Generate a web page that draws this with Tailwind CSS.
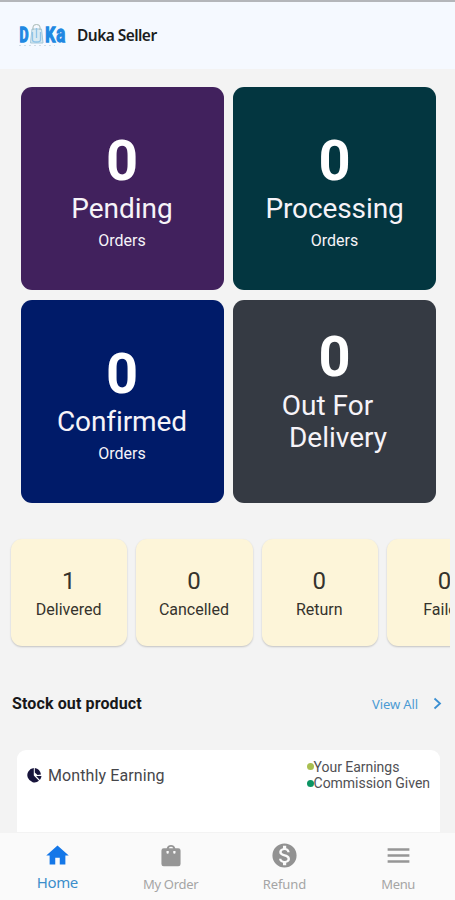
<!DOCTYPE html>
<html lang="en">
<head>
<meta charset="utf-8">
<meta name="viewport" content="width=device-width, initial-scale=1">
<title>Duka Seller</title>
<script src="https://cdn.jsdelivr.net/npm/@tailwindcss/browser@4"></script>
</head>
<body class="w-[455px] h-[900px] overflow-hidden bg-[#f3f3f3] font-['Roboto',sans-serif] flex flex-col whitespace-nowrap">
  <header class="h-[69px] shrink-0 border-t-2 border-[#b4b6ba] bg-[#f5f9ff] flex items-center pl-[19px]">
    <svg class="w-[48px] h-[26px] shrink-0 overflow-visible" viewBox="0 0 48 26">
      <g fill="#2088e2" stroke="#2088e2" stroke-width="1.3" class="font-['Roboto',sans-serif] font-bold">
        <text x="0.6" y="18.7" font-size="20" textLength="9" lengthAdjust="spacingAndGlyphs">D</text>
        <text x="26.3" y="18.7" font-size="20" textLength="10" lengthAdjust="spacingAndGlyphs">K</text>
        <text x="37.2" y="18.7" font-size="24" textLength="9" lengthAdjust="spacingAndGlyphs">a</text>
      </g>
      <path d="M13 6H22.500L24 20H11.500Z" fill="#d9eaf2" stroke="#a5c8d9"/>
      <path d="M14 7V4Q14 1.500 17.500 1.500T21 4V7" fill="none" stroke="#a8b9b5"/>
      <path d="M13.500 9V17Q13.500 19 17.500 19T21.500 17V9M17.500 5V15" fill="none" stroke="#8fc4e8" stroke-width="1.300"/>
      <path d="M0 22.500H36" stroke="#d2dce5" stroke-width="1" stroke-dasharray="2 3"/>
    </svg>
    <h1 class="ml-[10px] font-['Noto_Sans'] text-[15.5px] font-semibold tracking-[-0.55px] text-[#1b1c20]">Duka Seller</h1>
  </header>

  <main class="h-[763px] shrink-0 overflow-hidden">
    <section class="mt-[18px] ml-[20.5px] grid grid-cols-[203px_203px] grid-rows-[203px_203px] gap-[9.5px] text-[#f6f3f8] text-center">
      <div class="rounded-[11px] bg-[#41215d] pt-[44px]">
        <div class="text-[56px] leading-[60px] font-bold text-white">0</div>
        <div class="mt-[1px] text-[28px] leading-[34px]">Pending</div>
        <div class="mt-[5px] text-[16px] leading-[20px]">Orders</div>
      </div>
      <div class="rounded-[11px] bg-[#033640] pt-[44px]">
        <div class="text-[56px] leading-[60px] font-bold text-white">0</div>
        <div class="mt-[1px] text-[28px] leading-[34px] tracking-[-0.1px]">Processing</div>
        <div class="mt-[5px] text-[16px] leading-[20px]">Orders</div>
      </div>
      <div class="rounded-[11px] bg-[#001b69] pt-[44px]">
        <div class="text-[56px] leading-[60px] font-bold text-white">0</div>
        <div class="mt-[1px] text-[28px] leading-[34px] tracking-[-0.1px]">Confirmed</div>
        <div class="mt-[5px] text-[16px] leading-[20px]">Orders</div>
      </div>
      <div class="rounded-[11px] bg-[#353a43] pt-[27px]">
        <div class="text-[56px] leading-[60px] font-bold text-white">0</div>
        <div class="mt-[3px] pr-[14px] text-[28px] leading-[32.5px]">Out For</div>
        <div class="pl-[7px] text-[28px] leading-[32.5px]">Delivery</div>
      </div>
    </section>

    <section class="mt-[30px] w-[450px] h-[120px] overflow-hidden pt-[6px] pl-[11px] flex gap-[9px] text-center text-[#35332d]">
      <div class="w-[116.3px] h-[107px] shrink-0 rounded-[11px] bg-[#fdf5d9] shadow-[0_1px_2px_#0003] pt-[28px] pr-[1px]">
        <div class="text-[24px] leading-[28px]">1</div><div class="mt-[5px] text-[16px] leading-[20px]">Delivered</div>
      </div>
      <div class="w-[116.3px] h-[107px] shrink-0 rounded-[11px] bg-[#fdf5d9] shadow-[0_1px_2px_#0003] pt-[28px] pr-[1px]">
        <div class="text-[24px] leading-[28px]">0</div><div class="mt-[5px] text-[16px] leading-[20px]">Cancelled</div>
      </div>
      <div class="w-[116.3px] h-[107px] shrink-0 rounded-[11px] bg-[#fdf5d9] shadow-[0_1px_2px_#0003] pt-[28px] pr-[1px]">
        <div class="text-[24px] leading-[28px]">0</div><div class="mt-[5px] text-[16px] leading-[20px]">Return</div>
      </div>
      <div class="w-[116.3px] h-[107px] shrink-0 rounded-[11px] bg-[#fdf5d9] shadow-[0_1px_2px_#0003] pt-[28px] pr-[1px]">
        <div class="text-[24px] leading-[28px]">0</div><div class="mt-[5px] text-[16px] leading-[20px]">Failed</div>
      </div>
    </section>

    <section class="mt-[40px] h-[22px] pl-[12px] pr-[13px] flex items-center">
      <h2 class="text-[16px] font-bold tracking-[0.12px] text-[#18181a]">Stock out product</h2>
      <a class="ml-auto pt-[2px] font-['Noto_Sans'] text-[13px] tracking-[-0.1px] text-[#4b9bd3]">View All</a>
      <svg class="ml-[15px] w-[9px] h-[13px]" viewBox="0 0 9 13" fill="none" stroke="#3a8fd2" stroke-width="1.8"><path d="M1.5 1.5L7 6.5L1.5 11.5"/></svg>
    </section>

    <section class="mt-[35px] ml-[17px] w-[423px] h-[120px] rounded-t-[9px] bg-white pt-[9px] pl-[8px] pr-[10px] flex justify-between">
      <div class="h-[34px] flex items-center text-[16px] tracking-[0.1px] text-[#46464a]">
        <svg class="w-[18px] h-[17px] mr-[5px]" viewBox="0 0 17 17" fill="#17143b"><path d="M8.300 1A7.200 7.200 0 1 0 13.500 13.800L8.300 8.500Z"/><path d="M9.300 1Q14.500 1.700 15.500 7.500L12 7.900L9.300 5.500Z"/><path d="M10.600 8.900H16Q15.800 11.300 14.400 12.900Z"/></svg>
        <span>Monthly Earning</span>
      </div>
      <div class="text-[14px] leading-[16.5px] tracking-[-0.03px] text-[#505054]">
        <div class="flex items-center"><i class="w-[7px] h-[7px] rounded-full bg-[#a9bf51]"></i>Your Earnings</div>
        <div class="flex items-center"><i class="w-[7px] h-[7px] rounded-full bg-[#0c9463]"></i>Commission Given</div>
      </div>
    </section>
  </main>

  <nav class="h-[70px] shrink-0 bg-[#fafafa] border-t border-[#f3f3f3] grid grid-cols-4 text-center font-['Noto_Sans'] text-[#a5a5a5]">
    <div class="flex flex-col items-center pt-[9px] pl-[1px] text-[#3c8ecb]">
      <svg class="w-[27px] h-[27px]" viewBox="0 0 24 24" fill="#1477e8"><path d="M10 20v-6h4v6h5v-8h3L12 3 2 12h3v8z"/></svg>
      <span class="mt-[3px] text-[15px] leading-[20px] tracking-[-0.4px]">Home</span>
    </div>
    <div class="flex flex-col items-center pt-[9px]">
      <svg class="w-[28px] h-[27px]" viewBox="0 0 24 24"><path fill="#969696" fill-rule="evenodd" d="M18.500 5.500h-2.700a4 4 0 0 0-7.600 0H5.500a2 2 0 0 0-2 2v12q0 2 2 2h13q2 0 2-2v-12q0-2-2-2ZM10 9.500a1 1 0 0 1-2 0V8h2Zm0-4a2.200 2.200 0 0 1 4 0Zm6 4a1 1 0 0 1-2 0V8h2Z"/></svg>
      <span class="mt-[5px] text-[13px] leading-[20px] tracking-[-0.3px]">My Order</span>
    </div>
    <div class="flex flex-col items-center pt-[8px]">
      <svg class="w-[29px] h-[29px]" viewBox="0 0 24 24" fill="#929292"><path d="M12 2a10 10 0 1 0 0 20 10 10 0 0 0 0-20zm1.41 16.09V20h-2.67v-1.93c-1.71-.36-3.16-1.46-3.27-3.4h1.96c.1 1.05.82 1.87 2.65 1.87 1.96 0 2.4-.98 2.4-1.59 0-.83-.44-1.61-2.67-2.14-2.48-.6-4.18-1.62-4.18-3.67 0-1.72 1.39-2.84 3.11-3.21V4h2.67v1.95c1.86.45 2.79 1.86 2.85 3.39H14.3c-.05-1.11-.64-1.87-2.22-1.87-1.5 0-2.4.68-2.4 1.64 0 .84.65 1.39 2.67 1.91s4.18 1.39 4.18 3.91c-.01 1.83-1.38 2.83-3.12 3.16z"/></svg>
      <span class="mt-[4px] text-[13px] leading-[20px] tracking-[-0.1px]">Refund</span>
    </div>
    <div class="flex flex-col items-center pt-[8px]">
      <svg class="w-[29px] h-[29px]" viewBox="0 0 24 24" fill="#969696"><path d="M3 18h18v-2H3v2zm0-5h18v-2H3v2zm0-7v2h18V6H3z"/></svg>
      <span class="mt-[4px] text-[13px] leading-[20px] tracking-[-0.4px]">Menu</span>
    </div>
  </nav>
</body>
</html>
